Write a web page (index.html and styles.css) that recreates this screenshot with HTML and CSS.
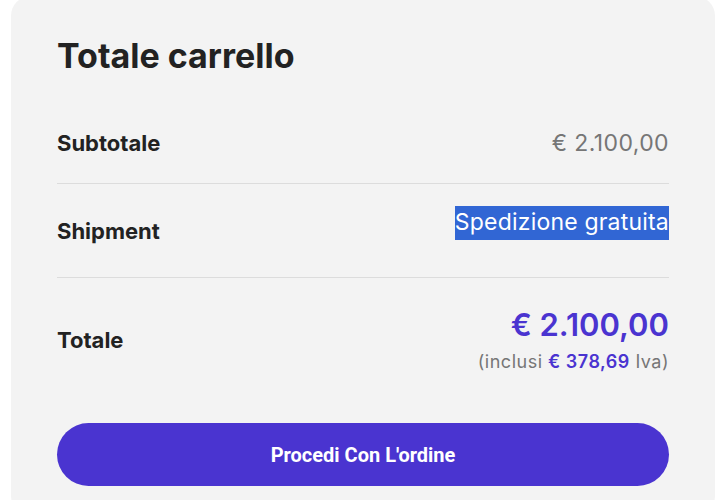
FILE: index.html
```html
<!DOCTYPE html>
<html lang="it">
<head>
    <meta charset="UTF-8">
    <meta name="viewport" content="width=device-width, initial-scale=1.0">
    <title>Totale carrello</title>
    <link rel="stylesheet" href="styles.css">
</head>
<body>
    <div class="cart-totals">
        <h2>Totale carrello</h2>
        <div class="row row-subtotal">
            <span class="label">Subtotale</span>
            <span class="value">€ 2.100,00</span>
        </div>
        <div class="row row-shipment">
            <span class="label">Shipment</span>
            <span class="value"><span class="selected">Spedizione gratuita</span></span>
        </div>
        <div class="row row-total">
            <span class="label">Totale</span>
            <div class="total-amount">
                <span class="price">€ 2.100,00</span>
                <small class="tax">(inclusi <strong>€ 378,69</strong> Iva)</small>
            </div>
        </div>
        <div class="checkout">
            <button class="btn">Procedi Con L'ordine</button>
        </div>
    </div>
</body>
</html>
```

FILE: styles.css
```css
:root {
    --card-bg: #f3f3f3;
    --text-color: #222222;
    --muted: #767676;
    --accent: #4a34d0;
    --line: #dcdcdc;
}
* {
    margin: 0;
    padding: 0;
    box-sizing: border-box;
}
body {
    background-color: #ffffff;
    font-family: 'Inter', sans-serif;
    color: var(--text-color);
    overflow: hidden;
}
.cart-totals {
    background-color: var(--card-bg);
    margin: -4px 0 0 11px;
    width: 704px;
    min-height: 520px;
    border-radius: 20px;
    padding: 40px 46px 0 46px;
}
.cart-totals h2 {
    font-size: 34px;
    font-weight: 700;
    line-height: 40px;
    margin-bottom: 28px;
}
.row {
    display: flex;
    justify-content: space-between;
    align-items: center;
    border-bottom: 1px solid var(--line);
}
.label {
    font-size: 22px;
    font-weight: 700;
    line-height: 24px;
}
.value {
    font-size: 23px;
    letter-spacing: 0.4px;
    color: var(--muted);
    line-height: 24px;
}
.row-subtotal {
    padding: 27px 0 28px;
}
.row-shipment {
    padding: 22px 0 22px;
}
.row-shipment .value {
    margin-bottom: 16px;
    line-height: 33px;
    letter-spacing: 0.2px;
}
.selected {
    background-color: #3166d4;
    color: #ffffff;
    padding: 2px 0 4px;
}
.row-total {
    border-bottom: none;
    padding: 25px 0 25px;
}
.total-amount {
    display: flex;
    flex-direction: column;
    align-items: flex-end;
}
.price {
    font-size: 31px;
    font-weight: 600;
    color: var(--accent);
    line-height: 44px;
}
.tax {
    font-size: 18px;
    letter-spacing: 0.5px;
    color: var(--muted);
    line-height: 30px;
}
.tax strong {
    color: var(--accent);
    font-weight: 600;
}
.checkout {
    padding-top: 21px;
}
.btn {
    display: block;
    width: 100%;
    height: 63px;
    border: none;
    border-radius: 32px;
    background-color: var(--accent);
    color: #ffffff;
    font-family: 'Roboto', sans-serif;
    font-size: 20px;
    font-weight: 700;
    cursor: pointer;
}
```
